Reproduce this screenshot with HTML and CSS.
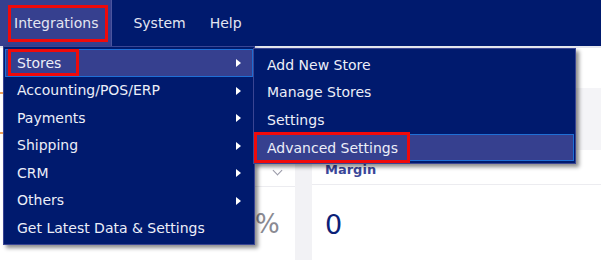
FILE: index.html
```html
<!DOCTYPE html>
<html lang="en">
<head>
  <meta charset="UTF-8">
  <title>Integrations menu</title>
  <link rel="stylesheet" href="styles.css">
</head>
<body>
  <nav class="topbar">
    <div class="nav-item active"><span class="mark">Integrations</span></div>
    <div class="nav-item">System</div>
    <div class="nav-item">Help</div>
  </nav>

  <div class="page">
    <div class="side">
      <div class="side-tab"></div>
    </div>
    <div class="left-card">
      <div class="card-head"><span class="chev"></span></div>
      <div class="card-value pct">%</div>
    </div>
    <div class="gutter"></div>
    <div class="card">
      <div class="card-head"><span class="card-title">Margin</span></div>
      <div class="card-value">0</div>
    </div>
  </div>

  <!-- dropdown -->
  <ul class="menu main-menu">
    <li class="hover has-sub"><span class="mark">Stores</span></li>
    <li class="has-sub">Accounting/POS/ERP</li>
    <li class="has-sub">Payments</li>
    <li class="has-sub">Shipping</li>
    <li class="has-sub">CRM</li>
    <li class="has-sub">Others</li>
    <li>Get Latest Data &amp; Settings</li>
  </ul>

  <ul class="menu sub-menu">
    <li>Add New Store</li>
    <li>Manage Stores</li>
    <li>Settings</li>
    <li class="hover"><span class="mark">Advanced Settings</span></li>
  </ul>
</body>
</html>
```

FILE: styles.css
```css
body { margin: 0; background: #fff; font-family: "DejaVu Sans", Verdana, sans-serif; font-size: 14px; color: #fff; overflow: hidden; }

.topbar { display: flex; height: 46px; background: #001a6e; border-bottom: 2px solid #e6e8f0; }
.nav-item { display: flex; align-items: center; color: #e4e6f2; margin-right: 24px; }
.nav-item.active { background: #36408f; border-right: 1px solid #4b559e; padding: 0 3px 0 8px; margin-right: 21px; }
.nav-item.active .mark { padding: 10px 10px 11px 6px; }

.mark { outline: 3px solid #f00a0a; outline-offset: -3px; }

.page { display: flex; height: 212px; }
.side { width: 4px; padding-top: 44px; }
.side-tab { height: 38px; border-top: 2px solid #f3a35c; border-bottom: 2px solid #f3a35c; }

.left-card { width: 42px; margin-left: 249px; padding-top: 112px; }
.card-head { height: 26px; border-bottom: 1px solid #ececf0; display: flex; align-items: center; }
.chev { width: 6px; height: 6px; border-right: 1px solid #9a9aa8; border-bottom: 1px solid #9a9aa8; transform: rotate(45deg); margin: -6px 0 0 21px; }
.gutter { width: 17px; background: #f2f2f5; }
.card { flex: 1; padding-top: 40px; }
.card::before { content: ""; display: block; height: 62px; margin: 0 0 10px 264px; background: #f4f4f7; }
.card-head .card-title { color: #3a4799; font-weight: bold; font-size: 13px; margin-left: 13px; margin-top: -6px; }
.card .card-head { height: 24px; }
.card-value { font-size: 27px; color: #0c1f78; padding: 24px 0 0 13px; }
.card-value.pct { color: #8a8a92; padding-left: 2px; padding-top: 22px; font-size: 26px; }

.menu { position: absolute; margin: 0; padding: 2px 1px; list-style: none; background: #001a6e; border: 1px solid #3a4593; box-shadow: 3px 3px 4px rgba(0, 0, 0, 0.45); }
.menu li { position: relative; height: 27.5px; display: flex; align-items: center; padding-left: 12px; color: #eceef8; white-space: nowrap; }
.menu li .mark { padding: 6px 18px 5px 9px; margin-left: -9px; }
.menu li.hover { background: #36408f; box-shadow: inset 0 0 0 1px #1f6fd6; }
.menu li.has-sub::after { content: ""; position: absolute; right: 12px; top: 10px; border-left: 5px solid #fff; border-top: 4px solid transparent; border-bottom: 4px solid transparent; }

.main-menu { left: 3px; top: 46px; width: 248px; }
.sub-menu { left: 253px; top: 48px; width: 319px; }
.sub-menu li.hover .mark { padding: 8px 12px 7px 13px; margin-left: -13px; }
```
